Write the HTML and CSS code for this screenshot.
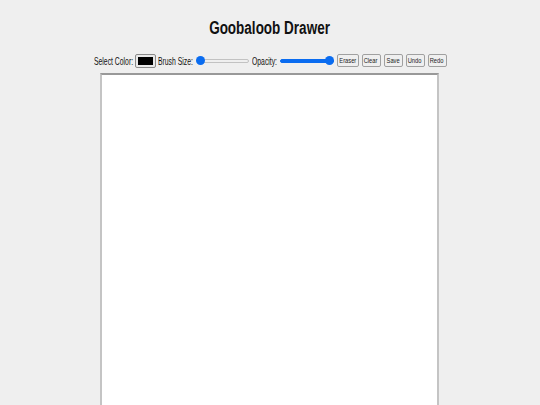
FILE: index.html
```html
<!DOCTYPE html>
<html>
<head>
<meta charset="utf-8">
<title>Goobaloob Drawer</title>
<link rel="stylesheet" href="styles.css">
</head>
<body>
<h1 class="title"><span class="cond">Goobaloob Drawer</span></h1>
<div class="toolbar">
  <span class="label label-color"><span class="cond-l">Select Color:</span></span>
  <span class="swatch"><span class="swatch-fill"></span></span>
  <span class="label label-brush"><span class="cond-l">Brush Size:</span></span>
  <span class="range range-min"><span class="track"></span><span class="thumb"></span></span>
  <span class="label label-opacity"><span class="cond-l">Opacity:</span></span>
  <span class="range range-max"><span class="track"></span><span class="thumb"></span></span>
  <button class="btn btn-wide"><span class="cond-b">Eraser</span></button>
  <button class="btn"><span class="cond-b">Clear</span></button>
  <button class="btn"><span class="cond-b">Save</span></button>
  <button class="btn"><span class="cond-b">Undo</span></button>
  <button class="btn btn-last"><span class="cond-b">Redo</span></button>
</div>
<div class="canvas-wrap"><div class="canvas"></div></div>
</body>
</html>
```
FILE: styles.css
```css
html, body {
  margin: 0;
  padding: 0;
  background: #efefef;
  font-family: "Liberation Sans", Arial, sans-serif;
  color: #111;
  overflow: hidden;
}
.title {
  margin: 0;
  padding-top: 17px;
  height: 22px;
  font-size: 18px;
  line-height: 22px;
  font-weight: bold;
  text-align: center;
}
.cond {
  display: inline-block;
  transform: scaleX(0.75);
  transform-origin: center;
}
.toolbar {
  margin-top: 14px;
  display: flex;
  justify-content: center;
  align-items: center;
  height: 15px;
}
.label {
  font-size: 11px;
  color: #111;
  white-space: nowrap;
  overflow: visible;
  margin-right: 2px;
}
.cond-l {
  display: inline-block;
  transform: scaleX(0.62);
  transform-origin: left center;
}
.label-color { width: 39px; }
.label-brush { width: 34px; margin-right: 3px; }
.label-opacity { width: 25px; margin-right: 3px; }
.swatch {
  width: 21px;
  height: 14px;
  box-sizing: border-box;
  border: 1px solid #8a8a8a;
  background: #e9e9e9;
  border-radius: 2px;
  padding: 2px;
  margin-right: 2px;
  display: flex;
}
.swatch-fill {
  flex: 1;
  background: #000;
}
.range {
  position: relative;
  width: 54px;
  height: 10px;
  margin-right: 3px;
}
.track {
  position: absolute;
  left: 0;
  right: 0;
  top: 3px;
  height: 4px;
  box-sizing: border-box;
  border-radius: 3px;
  border: 1px solid #c2c2c2;
  background: #efefef;
}
.range-min .track { left: 4px; }
.range-max .track {
  background: #0a6cf0;
  border-color: #0a6cf0;
}
.thumb {
  position: absolute;
  top: 0.5px;
  width: 9px;
  height: 9px;
  border-radius: 50%;
  background: #0a6cf0;
}
.range-min .thumb { left: 1px; }
.range-max .thumb { right: 0; }
.btn {
  font-family: inherit;
  font-size: 8px;
  width: 19px;
  height: 13px;
  padding: 0;
  margin: 0 3px 0 0;
  border: 1px solid #a0a0a0;
  border-radius: 2px;
  background: #efefef;
  color: #222;
  line-height: 11px;
  white-space: nowrap;
  overflow: visible;
  display: flex;
  justify-content: center;
  align-items: center;
}
.btn-wide { width: 22px; }
.btn-last { margin-right: 0; }
.cond-b {
  display: inline-block;
  transform: scaleX(0.72);
  transform-origin: center;
}
.canvas-wrap {
  display: flex;
  justify-content: center;
  margin-top: 5px;
}
.canvas {
  width: 335px;
  height: 400px;
  background: #fff;
  border: 2px solid #c4c4c4;
  border-top-color: #999;
  margin-left: -1px;
}
```
